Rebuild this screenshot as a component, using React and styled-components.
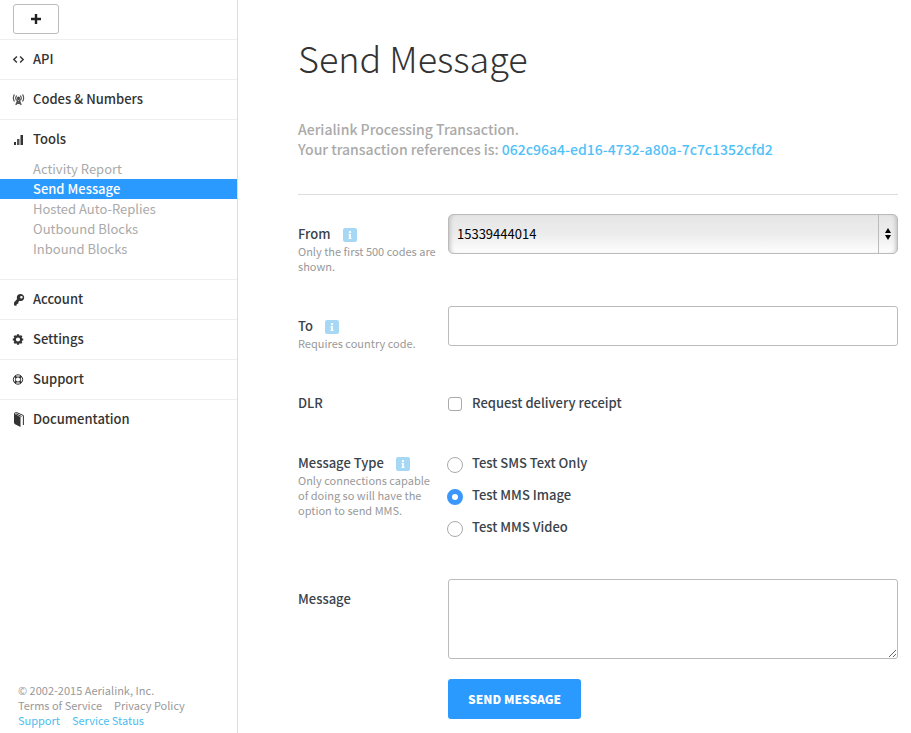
import React from "react";
import styled, { createGlobalStyle, css } from "styled-components";
import { FaInfo } from "react-icons/fa";

const GlobalStyle = createGlobalStyle`
  *, *::before, *::after { box-sizing: border-box; }
  body {
    margin: 0;
    background: #fff;
    color: #333;
    font-family: "Noto Sans CJK SC", "Noto Sans", sans-serif;
    font-size: 13px;
    line-height: 20px;
  }
  button, input, select, textarea { font: inherit; color: inherit; }
  a { text-decoration: none; color: inherit; }
`;

const Page = styled.div`
  display: grid;
  grid-template-columns: 238px minmax(0, 1fr);
  min-height: 100vh;
`;

const Sidebar = styled.aside`
  display: flex;
  flex-direction: column;
  justify-content: space-between;
  border-right: 1px solid #ddd;
`;

const AddBar = styled.div`
  padding: 4px 13px 5px;
  border-bottom: 1px solid #eee;
`;

const AddButton = styled.button`
  display: flex;
  align-items: center;
  justify-content: center;
  width: 46px;
  height: 30px;
  padding: 0;
  background: #fff;
  border: 1px solid #bbb;
  border-radius: 3px;
`;

const NavList = styled.ul`
  list-style: none;
  margin: 0;
  padding: 0;
`;

const NavItem = styled.li`
  border-bottom: 1px solid #eee;
  &:last-child { border-bottom: 0; }
`;

const NavLink = styled.a`
  display: flex;
  align-items: center;
  gap: 8px;
  height: 39px;
  padding: 0 0 1px 12px;
  font-weight: 500;
  svg { flex: none; }
`;

const SubList = styled.ul`
  list-style: none;
  margin: 0;
  padding: 0 0 20px;
`;

const SubLink = styled.a`
  display: block;
  height: 20px;
  padding-left: 33px;
  color: #aaa;
  ${(p) => p.$active && css`
    background: #2a9afe;
    color: #fff;
    font-weight: 500;
  `}
`;

const Footer = styled.footer`
  padding: 0 18px 5px;
  color: #999;
  font-size: 11px;
  line-height: 15px;
`;

const FooterRow = styled.div`
  display: flex;
  gap: 12px;
`;

const FooterLink = styled.a`
  color: ${(p) => (p.$accent ? "#4abdf0" : "inherit")};
`;

const Main = styled.main`
  padding: 27px 13px 14px 60px;
`;

const Title = styled.h1`
  margin: 0 0 32px;
  font-size: 36px;
  line-height: 60px;
  font-weight: 300;
`;

const Intro = styled.p`
  margin: 0;
  padding-bottom: 35px;
  border-bottom: 1px solid #ddd;
  color: #aaa;
  font-size: 14px;
  font-weight: 500;
`;

const Reference = styled.a`
  color: #4fc1f8;
`;

const Form = styled.form`
  padding-top: 19px;
  color: #3a434b;
`;

const Row = styled.div`
  display: grid;
  grid-template-columns: 150px minmax(0, 1fr);
  align-items: start;
  margin-bottom: ${(p) => (p.$tight ? 20 : 32)}px;
`;

const LabelCell = styled.div`
  padding: 10px 10px 0 0;
`;

const LabelLine = styled.div`
  display: flex;
  align-items: center;
  gap: 12px;
  font-weight: 500;
`;

const InfoButton = styled.button`
  display: flex;
  align-items: center;
  justify-content: center;
  width: 14px;
  height: 14px;
  margin-top: 2px;
  padding: 0;
  border: 0;
  border-radius: 2px;
  background: #a6d8f6;
  color: #fff;
`;

const Hint = styled.div`
  color: #999;
  font-size: 11px;
  line-height: 15px;
`;

const SelectBox = styled.div`
  position: relative;
`;

const Select = styled.select`
  display: block;
  appearance: none;
  width: 100%;
  height: 40px;
  padding: 0 28px 0 8px;
  border: 1px solid #bbb;
  border-radius: 5px;
  background: linear-gradient(#e6e6e6, #ececec 50%, #fefefe);
  box-shadow: inset 4px 0 4px -3px #bbb, inset -4px 0 4px -3px #bbb;
  color: #000;
`;

const SelectArrows = styled.span`
  position: absolute;
  top: 1px;
  right: 1px;
  bottom: 1px;
  display: flex;
  align-items: center;
  justify-content: center;
  width: 19px;
  border-left: 1px solid #bbb;
  pointer-events: none;
`;

const TextInput = styled.input`
  display: block;
  width: 100%;
  height: 40px;
  padding: 0 8px;
  border: 1px solid #bbb;
  border-radius: 3px;
  background: #fff;
`;

const TextArea = styled.textarea`
  display: block;
  width: 100%;
  height: 80px;
  padding: 8px;
  border: 1px solid #bbb;
  border-radius: 3px;
  background: #fff;
  resize: vertical;
`;

const Options = styled.div`
  display: grid;
  gap: 12px;
  padding: 10px 0;
`;

const Option = styled.label`
  display: grid;
  grid-template-columns: 14px auto;
  align-items: center;
  justify-content: start;
  justify-items: center;
  gap: 10px;
  height: 20px;
  font-weight: 500;
`;

const Checkbox = styled.input`
  appearance: none;
  width: 14px;
  height: 14px;
  margin: 2px 0 0;
  border: 1px solid #aaa;
  border-radius: 3px;
  background: #fff;
  &:checked { background: #2a9afe; border-color: #2a9afe; }
`;

const Radio = styled.input`
  appearance: none;
  width: 16px;
  height: 16px;
  margin: 3px -1px 0;
  border: 1px solid #aaa;
  border-radius: 50%;
  background: #fff;
  &:checked { border: 5px solid #3b97fb; }
`;

const Actions = styled.div`
  padding-left: 150px;
`;

const SubmitButton = styled.button`
  height: 40px;
  padding: 0 20px;
  border: 0;
  border-radius: 3px;
  background: #2a9afe;
  color: #fff;
  font-size: 12px;
  font-weight: 900;
  text-transform: uppercase;
`;

const Icon = ({ children, height = 14 }) => (
  <svg width="13" height={height} viewBox={`0 0 13 ${height}`} fill="#333" aria-hidden="true">
    {children}
  </svg>
);

const CodeIcon = () => (
  <Icon>
    <path d="M4.900 4.500 1.800 7.500l3.100 3M8.100 4.500l3.100 3-3.100 3" fill="none" stroke="#333" strokeWidth="1.4" />
  </Icon>
);

const TowerIcon = () => (
  <Icon>
    <g fill="none" stroke="#555" strokeWidth="1.2">
      <path d="M2.500 2.500C1 4 1 8 2.500 9.500M4.700 3.500C3.500 5 3.500 7 4.700 8.500M10.500 2.500c1.500 1.500 1.500 5.500 0 7M8.300 3.500c1.200 1.500 1.200 3.500 0 5" />
      <path d="M6.500 6 3.800 13M6.500 6l2.700 7M5 9.700h3M3.800 12.500 8 9.700M9.200 12.500 5 9.700" />
    </g>
    <circle cx="6.500" cy="6" r="1.500" fill="#444" />
  </Icon>
);

const BarsIcon = () => (
  <Icon>
    <path d="M2 10h2v3H2zM8.500 3h2.500v10H8.500z" />
    <path d="M5 7h2.500v6H5z" fill="#555" />
  </Icon>
);

const KeyIcon = () => (
  <Icon>
    <path fillRule="evenodd" d="M8.400 2C6.300 2 4.800 3.500 4.800 5.500c0 .5.1 1 .3 1.400L2 10.500v2.400l.8.900h1.700l.3-1.800 1.400-.3.2-1.700 1.200-1.200c.4.200.8.200 1.300.2 1.900 0 3.300-1.600 3.300-3.500S10.600 2 8.400 2zm1 1.900a1.300 1.300 0 1 1 0 2.600 1.300 1.300 0 0 1 0-2.600z" />
  </Icon>
);

const GearIcon = () => (
  <Icon>
    <circle cx="6" cy="7.500" r="3.200" fill="none" stroke="#333" strokeWidth="2.200" />
    <path d="M6 2.300V4M6 11v1.700M.8 7.500h1.700M9.500 7.500h1.700M2.300 3.800l1.200 1.200M8.500 10l1.200 1.200M9.700 3.800 8.500 5M3.500 10l-1.200 1.200" stroke="#333" strokeWidth="2.200" />
  </Icon>
);

const BuoyIcon = () => (
  <Icon>
    <g fill="none" stroke="#333">
      <circle cx="6" cy="7.500" r="4.700" />
      <circle cx="6" cy="7.500" r="2.600" />
      <path d="M2.800 4.300 4.300 5.800M9.200 4.300 7.700 5.800M2.800 10.700l1.500-1.500M9.200 10.700 7.700 9.200" strokeWidth="2" />
    </g>
  </Icon>
);

const BookIcon = () => (
  <Icon height={16}>
    <path d="M2 2.500 8.500 6v10L2.600 13 2 11.500z" />
    <path d="M2 2.500 4.500 1.500 11.400 4.500V14M4 2.800 9.500 5.500" fill="none" stroke="#333" />
  </Icon>
);

const tools = ["Activity Report", "Send Message", "Hosted Auto-Replies", "Outbound Blocks", "Inbound Blocks"];

const sections = [
  { name: "API", icon: CodeIcon },
  { name: "Codes & Numbers", icon: TowerIcon },
  { name: "Tools", icon: BarsIcon, children: tools },
  { name: "Account", icon: KeyIcon },
  { name: "Settings", icon: GearIcon },
  { name: "Support", icon: BuoyIcon },
  { name: "Documentation", icon: BookIcon },
];

const messageTypes = ["Test SMS Text Only", "Test MMS Image", "Test MMS Video"];

const FieldLabel = ({ id, htmlFor, text, hint }) => (
  <LabelCell>
    <LabelLine>
      {htmlFor ? <label htmlFor={htmlFor}>{text}</label> : <span id={id}>{text}</span>}
      {hint && (
        <InfoButton type="button" aria-label={`About ${text}`}>
          <FaInfo size={8} />
        </InfoButton>
      )}
    </LabelLine>
    {hint && <Hint>{hint}</Hint>}
  </LabelCell>
);

export default function App() {
  return (
    <>
      <GlobalStyle />
      <Page>
        <Sidebar>
          <nav>
            <AddBar>
              <AddButton type="button" aria-label="Add">
                <svg width="10" height="10" viewBox="0 0 10 10" aria-hidden="true">
                  <path d="M5 0v10M0 5h10" stroke="#222" strokeWidth="2.400" />
                </svg>
              </AddButton>
            </AddBar>
            <NavList>
              {sections.map(({ name, icon: SectionIcon, children }) => (
                <NavItem key={name}>
                  <NavLink href="#">
                    <SectionIcon />
                    {name}
                  </NavLink>
                  {children && (
                    <SubList>
                      {children.map((child) => (
                        <li key={child}>
                          <SubLink href="#" $active={child === "Send Message"}>{child}</SubLink>
                        </li>
                      ))}
                    </SubList>
                  )}
                </NavItem>
              ))}
            </NavList>
          </nav>
          <Footer>
            <div>© 2002-2015 Aerialink, Inc.</div>
            <FooterRow>
              <FooterLink href="#">Terms of Service</FooterLink>
              <FooterLink href="#">Privacy Policy</FooterLink>
            </FooterRow>
            <FooterRow>
              <FooterLink href="#" $accent>Support</FooterLink>
              <FooterLink href="#" $accent>Service Status</FooterLink>
            </FooterRow>
          </Footer>
        </Sidebar>
        <Main>
          <Title>Send Message</Title>
          <Intro>
            Aerialink Processing Transaction.
            <br />
            Your transaction references is: <Reference href="#">062c96a4-ed16-4732-a80a-7c7c1352cfd2</Reference>
          </Intro>
          <Form onSubmit={(e) => e.preventDefault()}>
            <Row>
              <FieldLabel htmlFor="from" text="From" hint="Only the first 500 codes are shown." />
              <SelectBox>
                <Select id="from" defaultValue="15339444014">
                  <option>15339444014</option>
                </Select>
                <SelectArrows>
                  <svg width="6" height="12" viewBox="0 0 6 12" aria-hidden="true">
                    <path d="M3 0l3 5H0zM3 12l3-5H0z" />
                  </svg>
                </SelectArrows>
              </SelectBox>
            </Row>
            <Row>
              <FieldLabel htmlFor="to" text="To" hint="Requires country code." />
              <TextInput id="to" type="text" />
            </Row>
            <Row $tight>
              <FieldLabel id="dlr" text="DLR" />
              <Options role="group" aria-labelledby="dlr">
                <Option>
                  <Checkbox type="checkbox" />
                  Request delivery receipt
                </Option>
              </Options>
            </Row>
            <Row>
              <FieldLabel
                id="type"
                text="Message Type"
                hint="Only connections capable of doing so will have the option to send MMS."
              />
              <Options role="radiogroup" aria-labelledby="type">
                {messageTypes.map((type) => (
                  <Option key={type}>
                    <Radio type="radio" name="type" defaultChecked={type === "Test MMS Image"} />
                    {type}
                  </Option>
                ))}
              </Options>
            </Row>
            <Row $tight>
              <FieldLabel htmlFor="message" text="Message" />
              <TextArea id="message" />
            </Row>
            <Actions>
              <SubmitButton type="submit">Send Message</SubmitButton>
            </Actions>
          </Form>
        </Main>
      </Page>
    </>
  );
}
